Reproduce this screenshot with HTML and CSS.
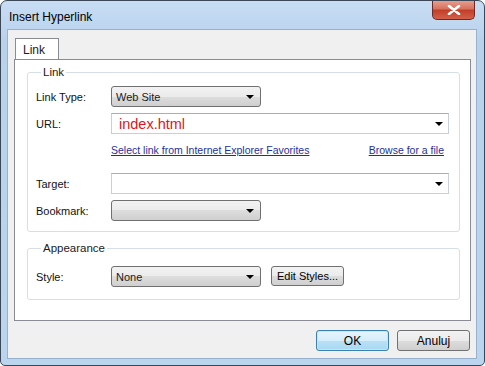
FILE: index.html
```html
<!DOCTYPE html>
<html lang="en">
<head>
  <meta charset="UTF-8">
  <title>Insert Hyperlink</title>
  <link rel="stylesheet" href="styles.css">
</head>
<body>

<div class="window">
  <div class="titlebar">
    <span class="title">Insert Hyperlink</span>
    <button class="close" aria-label="Close">
      <svg width="14" height="10" viewBox="0 0 14 10">
        <path d="M2 1 L12 9 M12 1 L2 9" stroke="#fff" stroke-width="2.6" stroke-linecap="round"/>
      </svg>
    </button>
  </div>

  <div class="client">
    <div class="tabs">
      <span class="tab">Link</span>
    </div>

    <div class="panel">
      <fieldset class="group">
        <legend>Link</legend>

        <div class="row">
          <label>Link Type:</label>
          <div class="combo short">Web Site <span class="arrow"></span></div>
        </div>

        <div class="row">
          <label>URL:</label>
          <div class="field"><span class="url">index.html</span> <span class="arrow"></span></div>
        </div>

        <div class="links">
          <a href="#">Select link from Internet Explorer Favorites</a>
          <a href="#">Browse for a file</a>
        </div>

        <div class="row target">
          <label>Target:</label>
          <div class="field"><span></span> <span class="arrow"></span></div>
        </div>

        <div class="row">
          <label>Bookmark:</label>
          <div class="combo short"><span></span> <span class="arrow"></span></div>
        </div>
      </fieldset>

      <fieldset class="group appearance">
        <legend>Appearance</legend>
        <div class="row">
          <label>Style:</label>
          <div class="combo short">None <span class="arrow"></span></div>
          <button class="btn edit">Edit Styles...</button>
        </div>
      </fieldset>
    </div>

    <div class="footer">
      <button class="btn ok">OK</button>
      <button class="btn">Anuluj</button>
    </div>
  </div>
</div>

</body>
</html>
```

FILE: styles.css
```css
body {
  margin: 0;
  font-family: 'Liberation Sans', Arial, sans-serif;
  font-size: 11px;
  color: #1b1b1b;
  background: #fff;
}

.window {
  width: 485px;
  height: 366px;
  box-sizing: border-box;
  border: 1px solid #3b4756;
  border-radius: 7px 7px 5px 5px;
  background: linear-gradient(#c7ddf4, #b9d2ec 40px, #bcd5ee);
  display: flex;
  flex-direction: column;
  overflow: hidden;
}

.titlebar {
  height: 29px;
  display: flex;
  justify-content: space-between;
  align-items: flex-start;
  padding-left: 8px;
}

.title {
  margin-top: 9px;
  font-size: 12px;
  color: #000;
}

.close {
  width: 43px;
  height: 20px;
  margin: -1px 9px 0 0;
  border: 1px solid #6d2a24;
  border-top: none;
  border-radius: 0 0 5px 5px;
  background: linear-gradient(#e8a393, #d7735f 45%, #c2402a 55%, #d4604a);
  display: flex;
  align-items: center;
  justify-content: center;
  padding: 0;
}

.client {
  flex: 1;
  margin: 0 8px 7px 7px;
  background: #f0f0f0;
  box-shadow: 0 0 0 1px #98b1cd;
  display: flex;
  flex-direction: column;
}

.tabs {
  padding: 8px 0 0 7px;
  display: flex;
  height: 21px;
}

.tab {
  width: 44px;
  height: 21px;
  box-sizing: border-box;
  border: 1px solid #898c95;
  border-bottom: none;
  background: #fff;
  padding: 4px 0 0 7px;
  font-size: 12px;
  position: relative;
  z-index: 1;
}

.panel {
  margin: 0 5px 0 6px;
  height: 262px;
  box-sizing: border-box;
  border: 1px solid #898c95;
  background: #fff;
  padding: 5px 10px 0 12px;
}

.group {
  margin: 0;
  border: 1px solid #d5dfe5;
  border-radius: 3px;
  padding: 7px 9px 10px 8px;
}

.group legend {
  margin-left: 5px;
  padding: 0 2px;
  font-size: 11.5px;
  line-height: 14px;
}

.appearance {
  margin-top: 9px;
  padding-top: 11px;
  padding-bottom: 12px;
}

.row {
  display: flex;
  align-items: center;
  height: 21px;
  margin-bottom: 6px;
}

.row:last-child {
  margin-bottom: 0;
}

.row.target {
  margin-top: 13px;
}

.row label {
  width: 75px;
  font-size: 11px;
  color: #111;
}

.combo {
  height: 21px;
  box-sizing: border-box;
  border: 1px solid #707070;
  border-radius: 3px;
  background: linear-gradient(#f2f2f2, #ebebeb 50%, #dddddd 50%, #cfcfcf);
  display: flex;
  align-items: center;
  justify-content: space-between;
  padding: 0 6px 0 4px;
  font-size: 11px;
}

.combo.short {
  width: 150px;
}

.field {
  flex: 1;
  height: 21px;
  margin-right: 1px;
  box-sizing: border-box;
  border: 1px solid #c5d0d8;
  border-top-color: #abadb3;
  background: #fff;
  display: flex;
  align-items: center;
  justify-content: space-between;
  padding: 0 5px 0 7px;
}

.url {
  color: #e0151b;
  font-size: 14.5px;
}

.arrow {
  width: 0;
  height: 0;
  border-left: 4px solid transparent;
  border-right: 4px solid transparent;
  border-top: 4px solid #000;
}

.links {
  display: flex;
  justify-content: space-between;
  height: 20px;
  align-items: center;
  margin-left: 75px;
  padding-right: 6px;
}

.links a {
  color: #1f2f9a;
  font-size: 10.5px;
}

.btn {
  font-family: inherit;
  font-size: 11px;
  color: #000;
  height: 21px;
  box-sizing: border-box;
  border: 1px solid #707070;
  border-radius: 3px;
  background: linear-gradient(#f2f2f2, #ebebeb 50%, #dddddd 50%, #cfcfcf);
  padding: 0;
}

.edit {
  width: 73px;
  height: 20px;
  margin-left: 10px;
  margin-top: -2px;
}

.footer {
  display: flex;
  justify-content: flex-end;
  gap: 8px;
  padding: 9px 6px 0 0;
}

.footer .btn {
  width: 73px;
  font-size: 12px;
}

.btn.ok {
  border-color: #3c7fb1;
  background: linear-gradient(#e5f4fc, #d6eefb 50%, #b9e1f6 50%, #a8d8f2);
  box-shadow: inset 0 0 0 1px #bfe8fa;
}
```
